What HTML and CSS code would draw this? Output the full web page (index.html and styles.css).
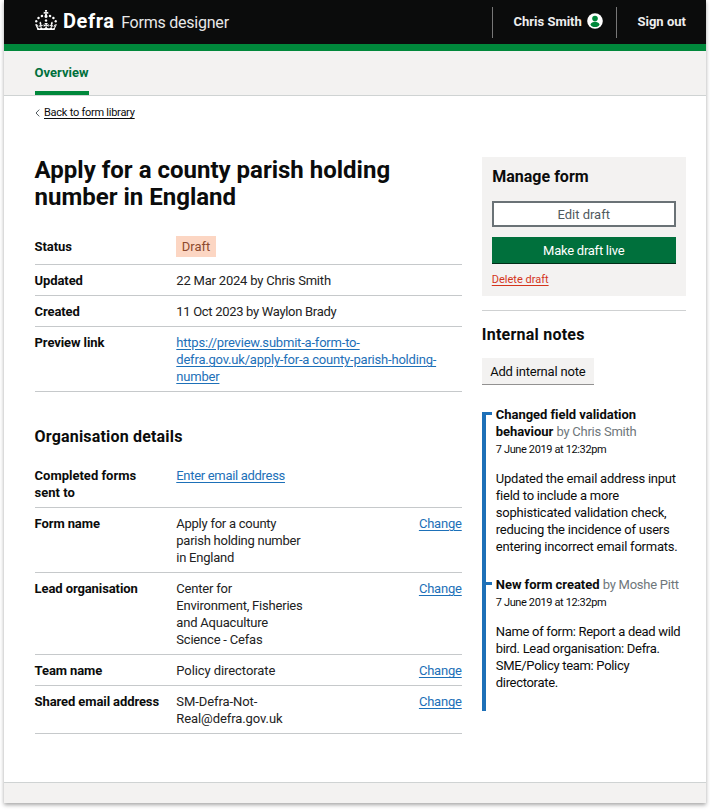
FILE: index.html
```html
<!DOCTYPE html>
<html lang="en">
<head>
<meta charset="utf-8">
<title>Forms designer</title>
<link rel="stylesheet" href="styles.css">
</head>
<body>
<div class="page">
  <header class="header">
    <div class="brand">
      <svg class="crown" viewBox="0 0 32 30" width="22" height="20.6" aria-hidden="true"><path fill="#fff" d="M22.6 10.4c-1 .4-2-.1-2.4-1-.4-.9.1-2 1-2.4.9-.4 2 .1 2.4 1s-.1 2-1 2.4m-5.9 6.7c-.9.4-2-.1-2.4-1-.4-.9.1-2 1-2.4.9-.4 2 .1 2.4 1s-.1 2-1 2.4m10.8-3.7c-1 .4-2-.1-2.4-1-.4-.9.1-2 1-2.4.9-.4 2 .1 2.4 1s0 2-1 2.4m3.3 4.8c-1 .4-2-.1-2.4-1-.4-.9.1-2 1-2.4.9-.4 2 .1 2.4 1s-.1 2-1 2.4M17 4.7l2.3 1.2V2.5l-2.3.7-.2-.2.9-3h-3.4l.9 3-.2.2c-.1.1-2.3-.7-2.3-.7v3.4L15 4.7c.1.1.1.2.2.2l-1.3 4c-.1.2-.1.4-.1.6 0 1.1.8 2 1.9 2.2h.7c1-.2 1.9-1.1 1.9-2.1 0-.2 0-.4-.1-.6l-1.3-4c-.1-.2 0-.2.1-.3m-7.6 5.7c.9.4 2-.1 2.4-1 .4-.9-.1-2-1-2.4-.9-.4-2 .1-2.4 1s0 2 1 2.4m-5 3c.9.4 2-.1 2.4-1 .4-.9-.1-2-1-2.4-.9-.4-2 .1-2.4 1s.1 2 1 2.4m-3.2 4.8c.9.4 2-.1 2.4-1 .4-.9-.1-2-1-2.4-.9-.4-2 .1-2.4 1s0 2 1 2.4m14.8 11c4.4 0 8.6.3 12.3.8 1.1-4.5 2.4-7 3.7-8.8l-2.5-.9c.2 1.3.3 1.9 0 2.7-.4-.4-.8-1.1-1.1-2.3l-1.2 4c.7-.5 1.3-.8 2-.9-1.1 2.5-2.6 3.1-3.5 3-1.1-.2-1.7-1.2-1.5-2.1.3-1.2 1.5-1.5 2.1-.1 1.1-2.3-.8-3-2-2.3 1.9-1.9 2.1-3.5.6-5.6-2.1 1.6-2.1 3.2-1.2 5.5-1.2-1.4-3.2-.6-2.5 1.6.9-1.4 2.1-.5 1.9.8-.2 1.1-1.7 2.1-3.5 1.9-2.7-.2-2.9-2.1-2.9-3.6.7-.1 1.9.5 2.9 1.9l.4-4.3c-1.1 1.1-2.1 1.4-3.2 1.4.4-1.2 2.1-3 2.1-3h-5.4s1.7 1.9 2.1 3c-1.1 0-2.1-.2-3.2-1.4l.4 4.3c1-1.4 2.2-2 2.9-1.9-.1 1.5-.2 3.4-2.9 3.6-1.9.2-3.4-.8-3.5-1.9-.2-1.3 1-2.2 1.9-.8.7-2.3-1.2-3-2.5-1.6.9-2.2.9-3.9-1.2-5.5-1.5 2-1.3 3.7.6 5.6-1.2-.7-3.1 0-2 2.3.6-1.4 1.8-1.1 2.1.1.2.9-.3 1.9-1.5 2.1-.9.2-2.4-.5-3.5-3 .6 0 1.2.3 2 .9l-1.2-4c-.3 1.1-.7 1.9-1.1 2.3-.3-.8-.2-1.4 0-2.7l-2.9.9C1.3 23 2.6 25.5 3.7 30c3.7-.5 7.9-.8 12.3-.8"/></svg>
      <span class="org">Defra</span>
      <span class="product">Forms designer</span>
    </div>
    <div class="account">
      <span class="user">Chris Smith</span>
      <svg class="avatar" viewBox="0 0 16 16" width="16" height="16" aria-hidden="true"><circle cx="8" cy="8" r="7.8" fill="#fff"/><circle cx="8" cy="5.6" r="2.8" fill="#00883b"/><path fill="#00883b" d="M3.400 11.400C4.100 9.500 6 9 8 9s3.900.5 4.600 2.400C11.900 13.200 10 14 8 14S4.100 13.200 3.400 11.400z"/></svg>
    </div>
    <div class="signout">Sign out</div>
  </header>
  <nav class="nav"><a class="tab">Overview</a></nav>
  <div class="back"><svg viewBox="0 0 5 8" width="5" height="8" aria-hidden="true"><path d="M4.300.6 1 4l3.300 3.400" fill="none" stroke="#505a5f" stroke-width="1"/></svg><a>Back to form library</a></div>
  <div class="columns">
    <main class="main">
      <h1>Apply for a county parish holding<br>number in England</h1>
      <dl class="list summary">
        <div class="row status"><dt>Status</dt><dd class="natural"><span class="tag">Draft</span></dd></div>
        <div class="row"><dt>Updated</dt><dd>22 Mar 2024 by Chris Smith</dd></div>
        <div class="row"><dt>Created</dt><dd class="tight">11 Oct 2023 by Waylon Brady</dd></div>
        <div class="row"><dt>Preview link</dt><dd><a class="link">https://preview.submit-a-form-to-<br>defra.gov.uk/apply-for-a county-parish-holding-<br>number</a></dd></div>
      </dl>
      <h2 class="details-title">Organisation details</h2>
      <dl class="list details">
        <div class="row"><dt class="natural">Completed forms<br>sent to</dt><dd class="tight"><a class="link">Enter email address</a></dd></div>
        <div class="row"><dt>Form name</dt><dd class="snug">Apply for a county<br>parish holding number<br>in England</dd><dd class="action"><a class="link">Change</a></dd></div>
        <div class="row"><dt>Lead organisation</dt><dd>Center for<br>Environment, Fisheries<br>and Aquaculture<br>Science - Cefas</dd><dd class="action"><a class="link">Change</a></dd></div>
        <div class="row"><dt>Team name</dt><dd class="loose">Policy directorate</dd><dd class="action"><a class="link">Change</a></dd></div>
        <div class="row"><dt>Shared email address</dt><dd class="loose">SM-Defra-Not-<br>Real@defra.gov.uk</dd><dd class="action"><a class="link">Change</a></dd></div>
      </dl>
    </main>
    <aside class="side">
      <section class="manage">
        <h2>Manage form</h2>
        <button class="button outline">Edit draft</button>
        <button class="button primary">Make draft live</button>
        <a class="delete">Delete draft</a>
      </section>
      <section class="notes">
        <h2 class="notes-title">Internal notes</h2>
        <button class="button grey">Add internal note</button>
        <div class="timeline">
          <article class="note">
            <h3>Changed field validation<br>behaviour <span class="by">by Chris Smith</span></h3>
            <time>7 June 2019 at 12:32pm</time>
            <p>Updated the email address input<br>field to include a more<br>sophisticated validation check,<br>reducing the incidence of users<br>entering incorrect email formats.</p>
          </article>
          <article class="note">
            <h3>New form created <span class="by">by Moshe Pitt</span></h3>
            <time>7 June 2019 at 12:32pm</time>
            <p class="tight">Name of form: Report a dead wild<br>bird. Lead organisation: Defra.<br>SME/Policy team: Policy<br>directorate.</p>
          </article>
        </div>
      </section>
    </aside>
  </div>
  <footer class="footer"></footer>
</div>
</body>
</html>
```
FILE: styles.css
```css
* { box-sizing: border-box; }
body { margin: 0; min-height: 811px; background: #fff; color: #0b0c0c; font: 13px/17px Roboto, "Liberation Sans", sans-serif; }
h1, h2, h3, p, dl, dd { margin: 0; }
.page { width: 702px; height: 803px; margin: 0 4px; display: flex; flex-direction: column; background: #fff; box-shadow: 0 2px 4px rgba(0,0,0,.35); white-space: nowrap; }
.header { height: 51px; flex: none; background: #0b0c0c; border-bottom: 7px solid #00883b; color: #fff; display: flex; padding-top: 7px; }
.brand { flex: 1; display: flex; padding-left: 30.5px; }
.crown { margin-top: 2.5px; }
.org { font-size: 20px; font-weight: 700; line-height: 29px; margin-left: 6.5px; letter-spacing: .6px; }
.product { font-size: 16px; line-height: 32px; margin-left: 6.5px; color: #e8e8e8; letter-spacing: -.23px; }
.account, .signout { height: 31px; border-left: 1px solid #777; font-weight: 700; line-height: 30px; color: #eee; }
.account { width: 124px; padding-left: 20.5px; display: flex; }
.avatar { margin: 6px 0 0 5.5px; }
.signout { width: 90px; padding-left: 20.5px; }
.nav { height: 45px; flex: none; background: #f3f2f1; border-bottom: 1px solid #cfd3d3; padding-left: 30.6px; display: flex; }
.tab { height: 44px; border-bottom: 4px solid #00883b; color: #00703c; font-weight: 700; line-height: 44px; }
.back { margin: 9px 0 0 31px; display: flex; align-items: center; gap: 4px; font-size: 11px; line-height: 16px; letter-spacing: -.25px; }
.back a { text-decoration: underline; text-underline-offset: 2px; }
.columns { display: flex; gap: 20px; padding: 36px 20.4px 0 30.6px; flex: 1; }
.main { width: 427.5px; }
h1 { font-size: 24px; line-height: 27px; letter-spacing: 0; }
.summary { margin-top: 18px; }
.row { display: flex; border-bottom: 1px solid #c6c9cb; padding: 7px 0 6.3px; }
.details .row { padding-bottom: 6.1px; }
dt { width: 141.7px; font-weight: 700; letter-spacing: -.1px; }
dd { flex: 1; color: #222; letter-spacing: -.2px; }
.snug { letter-spacing: -.25px; }
.tight { letter-spacing: -.31px; }
.loose { letter-spacing: -.08px; }
.natural { letter-spacing: 0; }
.status { padding: 7px 0; }
.status dt { padding-top: 1.5px; }
.tag { display: inline-block; background: #fcd6c3; color: #8d4a2e; padding: 1.5px 5.5px 2px; }
.action { flex: none; }
.link { color: #1d70b8; text-decoration: underline; text-underline-offset: 2px; }
h2 { font-size: 16px; line-height: 20px; }
.details-title { margin: 35px 0 12.6px; letter-spacing: .18px; }
.side { width: 204px; }
.manage { background: #f3f2f1; padding: 10px; height: 139px; }
.manage h2 { padding-left: .5px; }
.button { display: block; font: 13px/17px Roboto, "Liberation Sans", sans-serif; border: 0; padding: 0; }
.outline { width: 100%; height: 26px; background: #fff; border: 2px solid #6a7276; color: #505a5f; margin-top: 14px; }
.primary { width: 100%; height: 27px; background: #00703c; color: #fff; border-bottom: 1px solid #002d18; margin-top: 10px; letter-spacing: -.25px; }
.delete { display: block; margin-top: 9px; font-size: 11px; line-height: 14px; color: #d4351c; text-decoration: underline; text-underline-offset: 2px; }
.notes { margin-top: 14px; border-top: 1px solid #cfd1d2; padding-top: 14px; }
.notes-title { letter-spacing: .24px; }
.grey { width: 112px; height: 27px; background: #f3f2f1; color: #0b0c0c; border-bottom: 1px solid #929191; margin-top: 13px; letter-spacing: -.2px; }
.timeline { display: flow-root; margin-top: 27px; border-left: 4px solid #1d70b8; height: 299px; padding-left: 10px; }
.note { display: flow-root; position: relative; height: 170px; }
.note::before { content: ""; position: absolute; left: -10px; top: 0; width: 6px; height: 3px; background: #1d70b8; }
h3 { font-size: 13px; line-height: 17px; margin-top: -6px; padding-bottom: 6px; letter-spacing: -.04px; }
.by { font-weight: 400; color: #6f777b; letter-spacing: -.25px; }
time { display: block; font-size: 11px; line-height: 14px; margin-top: -3px; letter-spacing: -.37px; }
.note p { margin-top: 13px; letter-spacing: -.22px; }
.note .tight { letter-spacing: -.31px; }
.footer { height: 21px; flex: none; background: #f3f2f1; border-top: 1px solid #cfd3d3; }
```
